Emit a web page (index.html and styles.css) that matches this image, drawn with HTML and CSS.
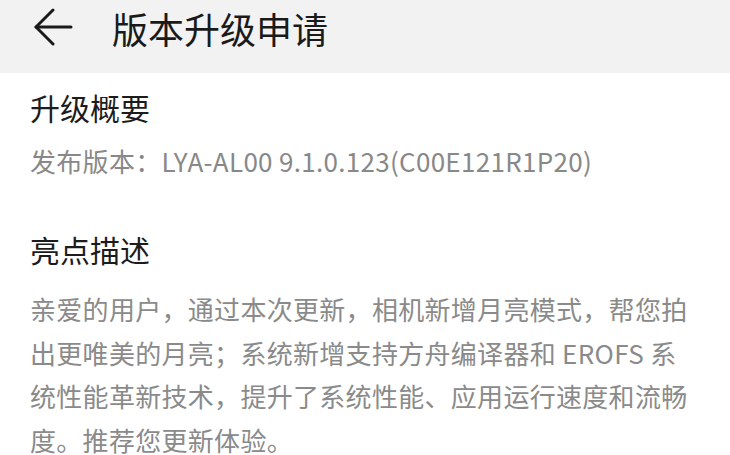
FILE: index.html
```html
<!DOCTYPE html>
<html lang="zh">
<head>
<meta charset="utf-8">
<link rel="stylesheet" href="styles.css">
</head>
<body>
<header class="bar">
  <svg class="back" width="40" height="38" viewBox="0 0 40 38" fill="none" stroke="#1a1a1a" stroke-width="3" stroke-linecap="round" stroke-linejoin="round">
    <path d="M38 19H3"/>
    <path d="M20 2L3 19L20 36"/>
  </svg>
  <h1 class="title">版本升级申请</h1>
</header>
<main class="content">
  <h2 class="heading">升级概要</h2>
  <p class="version">发布版本：LYA-AL00 9.1.0.123(C00E121R1P20)</p>
  <h2 class="heading second">亮点描述</h2>
  <p class="desc">亲爱的用户，通过本次更新，相机新增月亮模式，帮您拍出更唯美的月亮；系统新增支持方舟编译器和 EROFS 系统性能革新技术，提升了系统性能、应用运行速度和流畅度。推荐您更新体验。</p>
</main>
</body>
</html>
```
FILE: styles.css
```css
html, body {
  margin: 0;
  padding: 0;
  background: #ffffff;
  font-family: "Noto Sans CJK SC", "Noto Sans", sans-serif;
}
.bar {
  height: 73px;
  background: #f2f2f2;
  display: flex;
  align-items: center;
  padding: 0 0 17px 33px;
  box-sizing: border-box;
}
.back {
  display: block;
  margin-top: -3px;
}
.title {
  margin: 0 0 0 39px;
  font-size: 36px;
  font-weight: 400;
  color: #1a1a1a;
  line-height: 50px;
}
.content {
  padding: 0 30px;
}
.heading {
  margin: 0;
  font-size: 30px;
  font-weight: 400;
  color: #1c1c1c;
  line-height: 44px;
  padding-top: 12px;
}
.heading.second {
  padding-top: 46px;
}
.version {
  margin: 12px 0 0 0;
  font-size: 26px;
  color: #888888;
  line-height: 40px;
  letter-spacing: 0.3px;
}
.desc {
  margin: 16px 0 0 0;
  font-size: 26px;
  color: #8a8a8a;
  line-height: 43.5px;
  width: 662px;
  letter-spacing: 0.3px;
}
```
